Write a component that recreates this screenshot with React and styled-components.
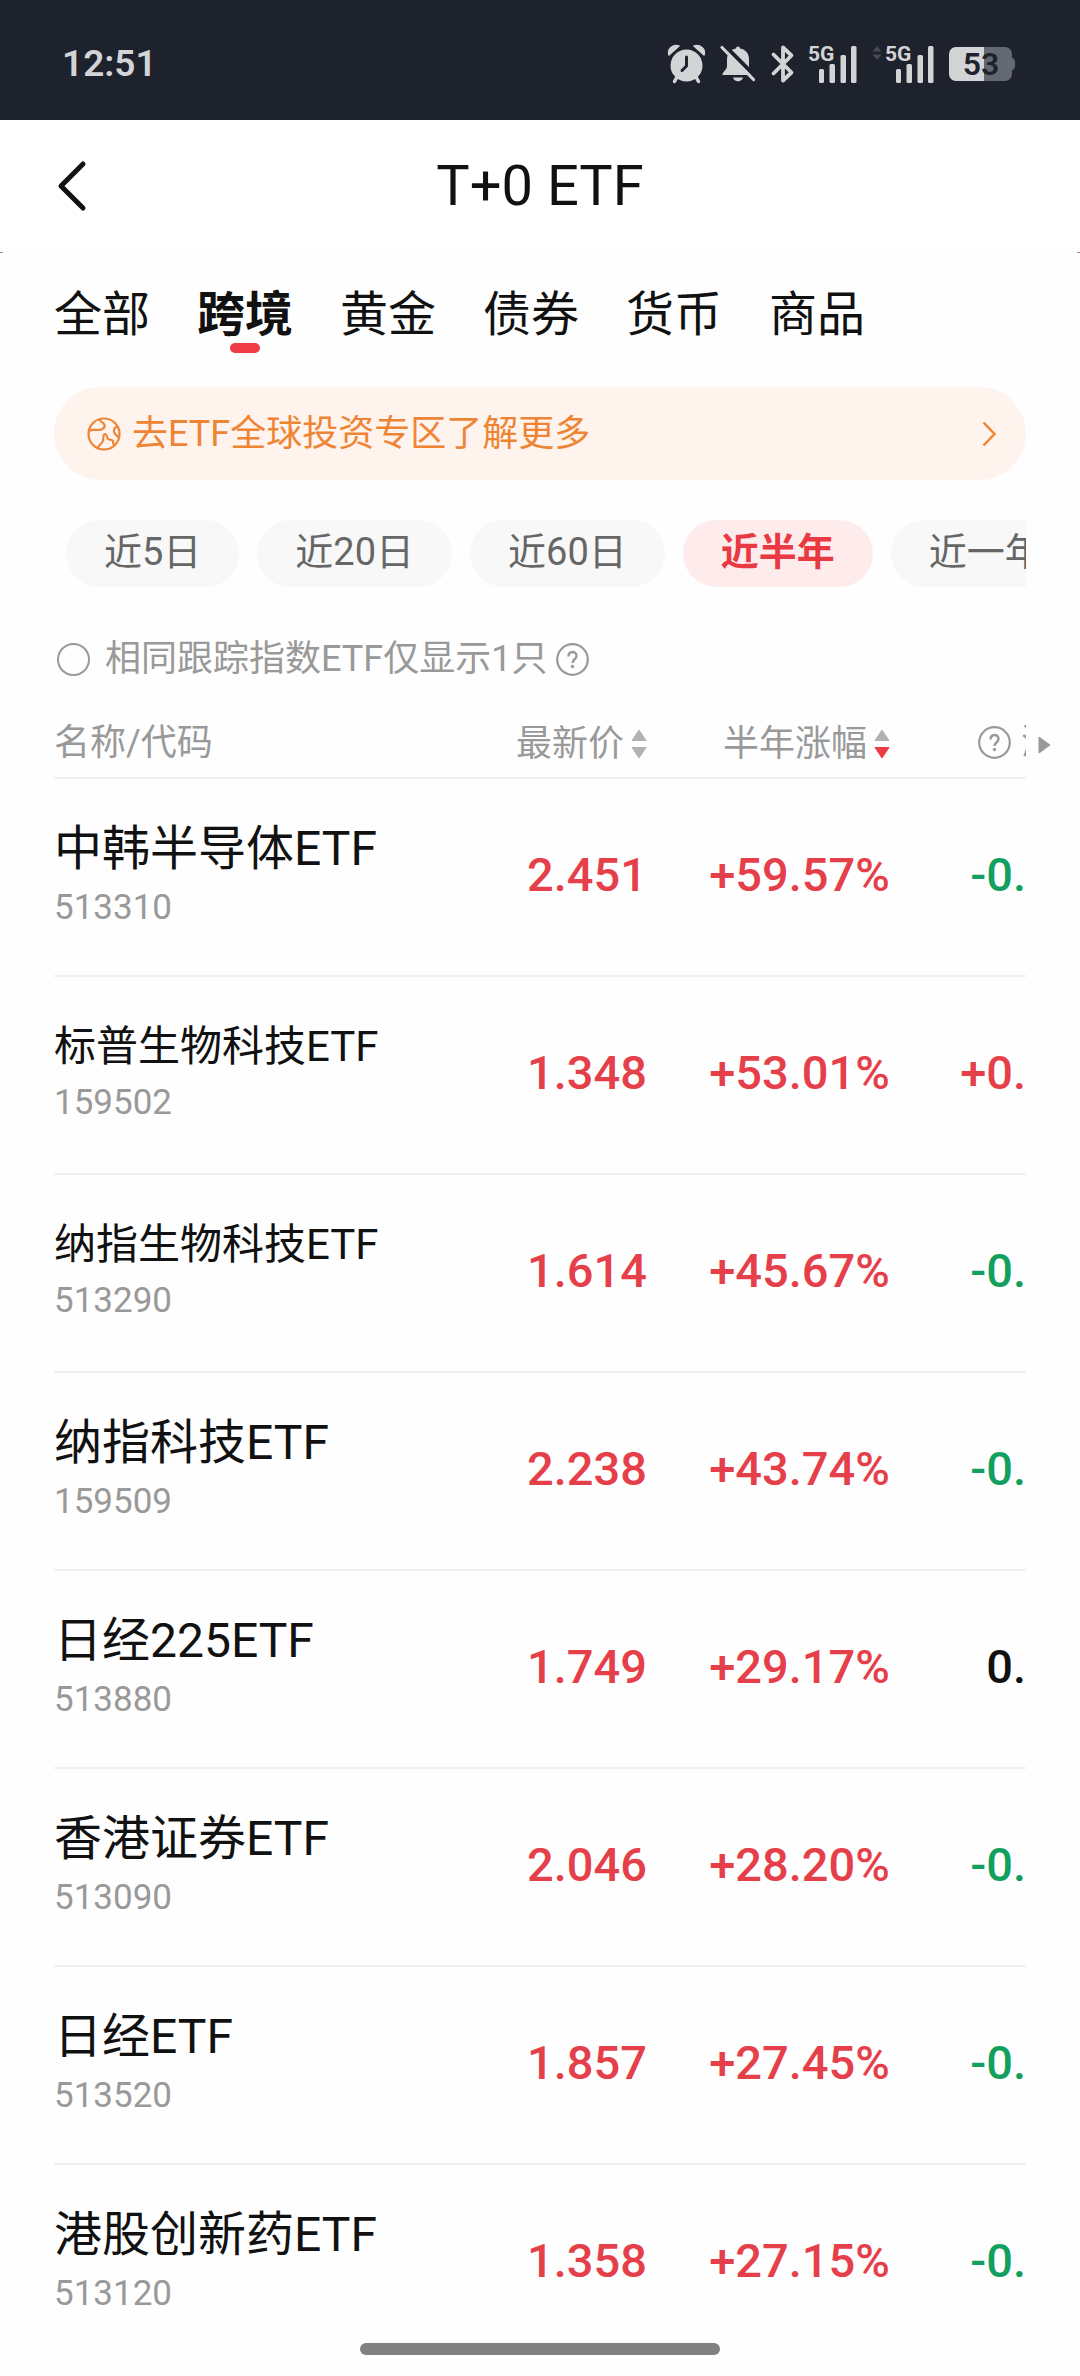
import React, { useState } from 'react'
import styled, { createGlobalStyle } from 'styled-components'

const GlobalStyle = createGlobalStyle`
  * {
    box-sizing: border-box;
  }
  body {
    margin: 0;
    background: #fefefe;
    color: #111;
    font-family: Roboto, "Noto Sans CJK SC", sans-serif;
  }
  button {
    padding: 0;
    border: 0;
    background: none;
    color: inherit;
    font: inherit;
    cursor: pointer;
  }
`

const Page = styled.div`
  min-height: 100vh;
  overflow: hidden;
`

const StatusBar = styled.div`
  height: 120px;
  padding: 7px 65px 0 62px;
  display: flex;
  align-items: center;
  justify-content: space-between;
  background: #1e222d;
  color: #d3d4d6;
`

const Clock = styled.span`
  font-size: 37px;
  font-weight: 600;
`

const StatusIcons = styled.div`
  display: flex;
  align-items: center;
  gap: 15px;
  svg {
    display: block;
    overflow: visible;
  }
`

const Header = styled.header`
  height: 132px;
  padding: 0 54px;
  display: grid;
  grid-template-columns: 1fr auto 1fr;
  align-items: center;
  background: #fff;
`

const BackButton = styled.button`
  justify-self: start;
  width: 36px;
  height: 54px;
  svg {
    display: block;
  }
`

const Title = styled.h1`
  margin: 0;
  font-size: 56px;
  font-weight: 400;
  line-height: 64px;
`

const EdgeMarks = styled.div`
  height: 1px;
  display: flex;
  justify-content: space-between;
  &::before, &::after {
    content: '';
    width: 3px;
    background: #b07a7e;
  }
`

const Main = styled.main`
  padding: 0 54px;
`

const Tabs = styled.nav`
  padding-top: 34px;
  display: flex;
  gap: 47px;
`

const Tab = styled.button`
  display: flex;
  flex-direction: column;
  align-items: center;
  font-size: 48px;
  line-height: 56px;
  font-weight: ${p => (p.$active ? 700 : 400)};
  &::after {
    content: '';
    width: 30px;
    height: 10px;
    border-radius: 5px;
    background: ${p => (p.$active ? '#f03a45' : 'transparent')};
  }
`

const Banner = styled.a`
  height: 93px;
  margin-top: 34px;
  padding: 0 30px 0 33px;
  display: flex;
  align-items: center;
  gap: 11px;
  border-radius: 47px;
  background: #fff3ed;
  color: #ee8535;
  font-size: 36px;
  line-height: 48px;
  text-decoration: none;
  span {
    flex: 1;
  }
`

const Periods = styled.div`
  margin-top: 40px;
  padding-left: 12px;
  display: flex;
  gap: 18px;
  overflow: hidden;
`

const Period = styled.button`
  flex: none;
  height: 67px;
  padding: 0 38px 3px;
  border-radius: 34px;
  font-size: 38px;
  line-height: 60px;
  white-space: nowrap;
  background: ${p => (p.$active ? '#feecec' : '#f8f8f8')};
  color: ${p => (p.$active ? '#e93a44' : '#666')};
  font-weight: ${p => (p.$active ? 700 : 400)};
`

const Filter = styled.div`
  height: 48px;
  margin-top: 48px;
  padding-left: 3px;
  display: flex;
  align-items: center;
  gap: 9px;
  color: #999;
  font-size: 36px;
  line-height: 48px;
  label {
    display: flex;
    align-items: center;
    gap: 15px;
  }
`

const Radio = styled.input`
  appearance: none;
  width: 33px;
  height: 33px;
  margin: 0;
  border: 2px solid #999;
  border-radius: 50%;
  &:checked {
    border: 10px solid #e93a44;
  }
`

const HelpButton = styled.button`
  width: 33px;
  height: 33px;
  svg {
    display: block;
  }
`

const TableWrap = styled.div`
  position: relative;
  margin-top: 25px;
`

const TableScroll = styled.div`
  overflow: hidden;
`

const MoreHint = styled.svg`
  position: absolute;
  top: 28px;
  right: -25px;
`

const Table = styled.table`
  width: 100%;
  table-layout: fixed;
  border-collapse: separate;
  border-spacing: 0;
`

const Th = styled.th`
  height: 71px;
  padding: 0;
  border-bottom: 2px solid #f0f0f0;
  color: #999;
  font-size: 36px;
  font-weight: 400;
  line-height: 48px;
  text-align: ${p => (p.$left ? 'left' : 'right')};
  white-space: nowrap;
`

const SortButton = styled.button`
  display: inline-flex;
  align-items: center;
  gap: 7px;
  vertical-align: middle;
`

const PremiumHead = styled.div`
  padding-left: 88px;
  display: flex;
  align-items: center;
  gap: 10px;
`

const Td = styled.td`
  height: 198px;
  padding: 0;
  border-bottom: 2px solid #f0f0f0;
  tr:last-child & {
    border-bottom-color: transparent;
  }
`

const NameTd = styled(Td)`
  padding-bottom: 10px;
`

const FundName = styled.div`
  font-size: ${p => (p.$small ? 42 : 48)}px;
  line-height: ${p => (p.$small ? 66 : 72)}px;
  white-space: nowrap;
`

const FundCode = styled.div`
  color: #999;
  font-size: 35px;
  line-height: 46px;
`

const COLORS = { up: '#e5404a', down: '#12a05f', flat: '#111' }

const NumTd = styled(Td)`
  padding-bottom: 6px;
  color: ${p => COLORS[p.$trend]};
  font-size: 47px;
  font-weight: 500;
  text-align: right;
  white-space: nowrap;
`

const HomeBar = styled.div`
  position: fixed;
  bottom: 21px;
  left: 50%;
  width: 360px;
  height: 12px;
  margin-left: -180px;
  border-radius: 6px;
  background: #808080;
`

const tabs = ['全部', '跨境', '黄金', '债券', '货币', '商品']
const periods = ['近5日', '近20日', '近60日', '近半年', '近一年']

const funds = [
  { name: '中韩半导体ETF', code: '513310', price: '2.451', change: '+59.57%', premium: '-0.', trend: 'down' },
  { name: '标普生物科技ETF', code: '159502', price: '1.348', change: '+53.01%', premium: '+0.', trend: 'up' },
  { name: '纳指生物科技ETF', code: '513290', price: '1.614', change: '+45.67%', premium: '-0.', trend: 'down' },
  { name: '纳指科技ETF', code: '159509', price: '2.238', change: '+43.74%', premium: '-0.', trend: 'down' },
  { name: '日经225ETF', code: '513880', price: '1.749', change: '+29.17%', premium: '0.', trend: 'flat' },
  { name: '香港证券ETF', code: '513090', price: '2.046', change: '+28.20%', premium: '-0.', trend: 'down' },
  { name: '日经ETF', code: '513520', price: '1.857', change: '+27.45%', premium: '-0.', trend: 'down' },
  { name: '港股创新药ETF', code: '513120', price: '1.358', change: '+27.15%', premium: '-0.', trend: 'down' },
]

const AlarmIcon = () => (
  <svg width="37" height="38" viewBox="0 0 37 38" fill="currentColor">
    <circle cx="18.500" cy="20.500" r="16" />
    <path d="M1 10C-1 4 5-1 11 1z" stroke="currentColor" strokeWidth="1.500" strokeLinejoin="round" />
    <path d="M36 10C38 4 32-1 26 1z" stroke="currentColor" strokeWidth="1.500" strokeLinejoin="round" />
    <path d="M9 32l-2.500 4.500M28 32l2.500 4.500" stroke="currentColor" strokeWidth="3.500" strokeLinecap="round" />
    <path d="M18.500 12v9l-4.500 4.500" fill="none" stroke="#1e222d" strokeWidth="3" strokeLinecap="round" strokeLinejoin="round" />
  </svg>
)

const MutedIcon = () => (
  <svg width="36" height="38" viewBox="0 0 36 38">
    <path d="M18 1.500c1.500 0 2 1 2 2 6 1 9 5.500 9 11v7c0 3 4 5 4 7v1.500H2.500C2 27 7 25 7 21v-6.500c0-5.500 3-10 9-11 0-1 .5-2 2-2z" fill="currentColor" />
    <path d="M13 32.500h10c-1 5-9 5-10 0z" fill="currentColor" />
    <path d="M4 0l32 32" stroke="#1e222d" strokeWidth="4" />
    <path d="M2 2.500l31.500 32" stroke="currentColor" strokeWidth="3.200" strokeLinecap="round" />
  </svg>
)

const BluetoothIcon = () => (
  <svg width="23" height="38" viewBox="0 0 23 38" fill="none" stroke="currentColor" strokeWidth="3.800" strokeLinecap="round" strokeLinejoin="round">
    <path d="M2.500 9.500L20.500 27.500l-8.500 8V2.500l8.500 8L2.500 28.500" />
  </svg>
)

const SignalIcon = ({ data }) => (
  <svg width={data ? 62 : 48} height="38" viewBox={data ? '-14 0 62 38' : '0 0 48 38'} fill="currentColor">
    {data && <path d="M-13.500 6.500l4.500-5.500 4.500 5.500zM-13.500 9.500h9l-4.500 5.500z" fill="#454955" />}
    <text x="-1" y="16" fontSize="21" fontWeight="700">5G</text>
    <rect x="10" y="24" width="5" height="14" rx="1.500" />
    <rect x="20.500" y="19" width="5.500" height="19" rx="1.500" />
    <rect x="31.500" y="10" width="5.500" height="28" rx="1.500" />
    <rect x="42" y="1" width="5.500" height="37" rx="1.500" />
  </svg>
)

const BatteryIcon = () => (
  <svg width="66" height="34" viewBox="0 0 66 34">
    <path d="M35 0h21a7 7 0 017 7v4c2 0 3 2 3 4v4c0 2-1 4-3 4v4a7 7 0 01-7 7H35z" fill="#646870" />
    <path d="M7 0h28v34H7a7 7 0 01-7-7V7a7 7 0 017-7z" fill="currentColor" />
    <text x="32" y="28" fontSize="32" fontWeight="600" textAnchor="middle" fill="#1e222d">53</text>
  </svg>
)

const GlobeIcon = () => (
  <svg width="34" height="34" viewBox="0 0 34 34" fill="none" stroke="currentColor" strokeWidth="2.200" strokeLinejoin="round">
    <circle cx="17" cy="17" r="15.500" />
    <path d="M2 14c3-2 6-1 9-1 5 0 8-3 6-6-1-2-4-2-5-5" />
    <path d="M11 31c0-3 4-4 5-7 .5-3 0-7 2-7s2 4 3 5 4 0 5 2c.5 1.500-1 3 2 4" />
    <path d="M30 10c-2 0-3 2-3 4.500 0 3 3 3 4.500 6" />
  </svg>
)

const QuestionIcon = () => (
  <svg width="33" height="33" viewBox="0 0 33 33" fill="none" stroke="#999">
    <circle cx="16.500" cy="16.500" r="15.300" strokeWidth="2.200" />
    <path d="M12.500 13.500c0-6 8-6 8-.5 0 3.500-4 3-4 7" strokeWidth="2.400" />
    <circle cx="16.500" cy="23.500" r="1.700" fill="#999" stroke="none" />
  </svg>
)

const SortArrows = ({ desc }) => (
  <svg width="16" height="30" viewBox="0 0 16 30">
    <path d="M8 1l7 10.500H1z" fill="#b2b2b2" stroke="#b2b2b2" strokeLinejoin="round" />
    <path d="M8 29l7-10.500H1z" fill={desc ? '#ec3c44' : '#b2b2b2'} stroke={desc ? '#ec3c44' : '#b2b2b2'} strokeLinejoin="round" />
  </svg>
)

function FundRow({ fund }) {
  return (
    <tr>
      <NameTd>
        <FundName $small={fund.name.length > 8}>{fund.name}</FundName>
        <FundCode>{fund.code}</FundCode>
      </NameTd>
      <NumTd $trend="up">{fund.price}</NumTd>
      <NumTd $trend="up">{fund.change}</NumTd>
      <NumTd $trend={fund.trend}>{fund.premium}</NumTd>
    </tr>
  )
}

function App() {
  const [tab, setTab] = useState('跨境')
  const [period, setPeriod] = useState('近半年')

  return (
    <Page>
      <GlobalStyle />
      <StatusBar>
        <Clock>12:51</Clock>
        <StatusIcons>
          <AlarmIcon />
          <MutedIcon />
          <BluetoothIcon />
          <SignalIcon />
          <SignalIcon data />
          <BatteryIcon />
        </StatusIcons>
      </StatusBar>

      <Header>
        <BackButton aria-label="返回">
          <svg width="36" height="54" viewBox="0 0 36 54" fill="none" stroke="#111" strokeWidth="5" strokeLinecap="round" strokeLinejoin="round">
            <path d="M29 5L7 27l22 22" />
          </svg>
        </BackButton>
        <Title>T+0 ETF</Title>
      </Header>
      <EdgeMarks />

      <Main>
        <Tabs>
          {tabs.map(t => (
            <Tab key={t} $active={t === tab} onClick={() => setTab(t)}>{t}</Tab>
          ))}
        </Tabs>

        <Banner href="#global">
          <GlobeIcon />
          <span>去ETF全球投资专区了解更多</span>
          <svg width="14" height="26" viewBox="0 0 14 26" fill="none" stroke="currentColor" strokeWidth="2.500">
            <path d="M1.500 1.500L12.500 13 1.500 24.500" />
          </svg>
        </Banner>

        <Periods>
          {periods.map(p => (
            <Period key={p} $active={p === period} onClick={() => setPeriod(p)}>{p}</Period>
          ))}
        </Periods>

        <Filter>
          <label>
            <Radio type="checkbox" />
            相同跟踪指数ETF仅显示1只
          </label>
          <HelpButton aria-label="说明"><QuestionIcon /></HelpButton>
        </Filter>

        <TableWrap>
          <TableScroll>
            <Table>
              <colgroup>
                <col width="39%" />
                <col width="22%" />
                <col width="25%" />
                <col width="14%" />
              </colgroup>
              <thead>
                <tr>
                  <Th $left>名称/代码</Th>
                  <Th><SortButton>最新价<SortArrows /></SortButton></Th>
                  <Th><SortButton>半年涨幅<SortArrows desc /></SortButton></Th>
                  <Th $left>
                    <PremiumHead>
                      <HelpButton aria-label="溢价率说明"><QuestionIcon /></HelpButton>
                      溢价率
                    </PremiumHead>
                  </Th>
                </tr>
              </thead>
              <tbody>
                {funds.map(f => <FundRow key={f.code} fund={f} />)}
              </tbody>
            </Table>
          </TableScroll>
          <MoreHint width="13" height="18" viewBox="0 0 13 18">
            <path d="M1 1l11 8-11 8z" fill="#999" stroke="#999" strokeLinejoin="round" />
          </MoreHint>
        </TableWrap>
      </Main>
      <HomeBar />
    </Page>
  )
}

export default App
